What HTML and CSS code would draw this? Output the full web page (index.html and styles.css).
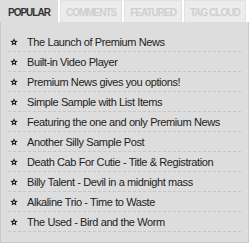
FILE: index.html
```html
<!DOCTYPE html>
<html lang="en">

<head>
    <meta charset="UTF-8">
    <meta name="viewport" content="width=device-width, initial-scale=1.0">
    <title>Tabs</title>
    <link rel="stylesheet" href="styles.css">
</head>

<body>
    <div class="tabber">
        <ul class="tabs">
            <li class="tab active">POPULAR</li>
            <li class="tab">COMMENTS</li>
            <li class="tab">FEATURED</li>
            <li class="tab">TAG CLOUD</li>
        </ul>

        <div class="panel">
            <ul class="post-list">
                <li><span class="star"></span>The Launch of Premium News</li>
                <li><span class="star"></span>Built-in Video Player</li>
                <li><span class="star"></span>Premium News gives you options!</li>
                <li><span class="star"></span>Simple Sample with List Items</li>
                <li><span class="star"></span>Featuring the one and only Premium News</li>
                <li><span class="star"></span>Another Silly Sample Post</li>
                <li><span class="star"></span>Death Cab For Cutie - Title &amp; Registration</li>
                <li><span class="star"></span>Billy Talent - Devil in a midnight mass</li>
                <li><span class="star"></span>Alkaline Trio - Time to Waste</li>
                <li><span class="star"></span>The Used - Bird and the Worm</li>
            </ul>
        </div>
    </div>

    <script>
        // draw the same little star in front of every post
        const star = '<svg width="8" height="8" viewBox="0 0 10 10"><polygon points="5,0.3 6.3,3.5 9.7,3.6 7.1,5.8 8,9.4 5,7.4 2,9.4 2.9,5.8 0.3,3.6 3.7,3.5" fill="#111"/><circle cx="5" cy="5.3" r="1.2" fill="#ddd"/></svg>';
        document.querySelectorAll('.star').forEach(el => {
            el.innerHTML = star;
        });
    </script>
</body>

</html>
```

FILE: styles.css
```css
* {
    margin: 0;
    padding: 0;
    box-sizing: border-box;
}

body {
    font-family: 'Liberation Sans', Arial, sans-serif;
    background: white;
    color: #222;
}

.tabber {
    width: 249px;
}

.tabs {
    list-style: none;
    display: flex;
    gap: 2px;
    height: 22px;
}

.tab {
    height: 22px;
    padding: 0 5px;
    line-height: 23px;
    font-size: 10px;
    font-weight: bold;
    letter-spacing: -1px;
    white-space: nowrap;
    text-align: center;
    color: #cfcfcf;
    background: #ececec;
    border: 1px solid #e2e2e2;
    border-bottom: none;
}

.tab.active {
    color: #333;
    background: #dddddd;
    border-color: #dddddd;
    padding: 0 7px;
}

.panel {
    background: #dddddd;
    border: 1px solid #c9c9c9;
    border-top: none;
    height: 221px;
    padding: 10px 7px 0 7px;
}

.post-list {
    list-style: none;
}

.post-list li {
    display: flex;
    align-items: center;
    height: 20px;
    font-size: 11px;
    letter-spacing: -0.4px;
    white-space: nowrap;
    overflow: hidden;
    border-bottom: 1px dashed #c6c6c6;
    padding-left: 2px;
}

.star {
    display: flex;
    width: 17px;
}
```
